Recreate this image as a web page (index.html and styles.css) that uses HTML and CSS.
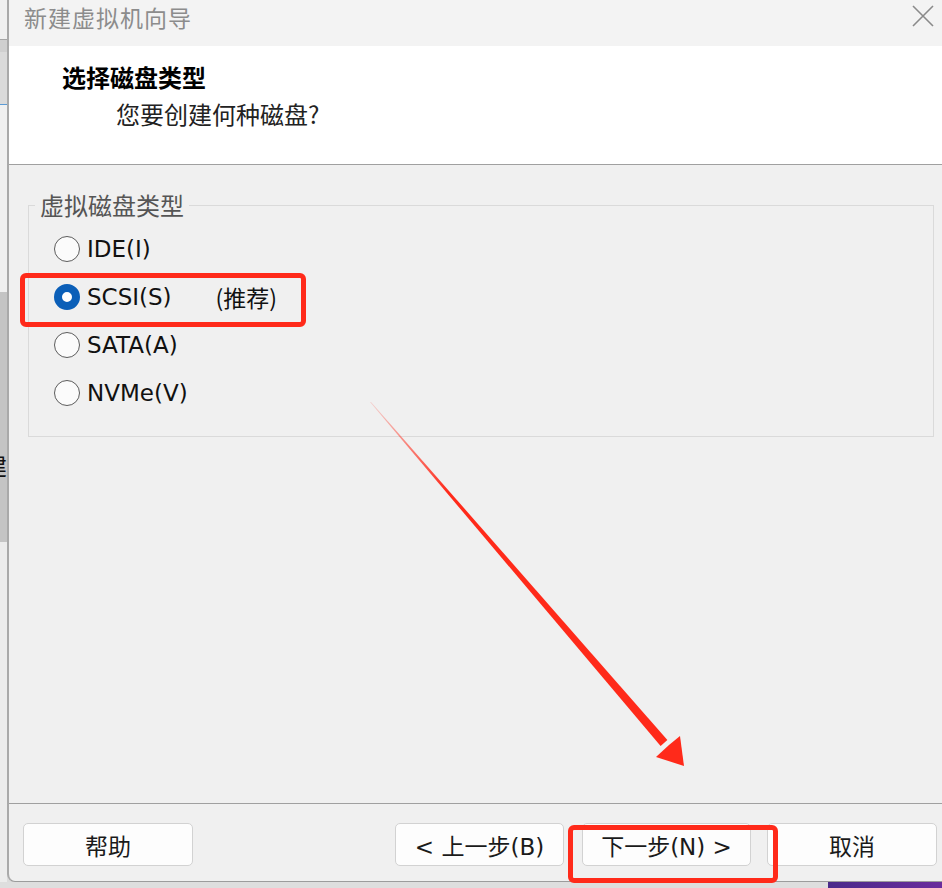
FILE: index.html
```html
<!DOCTYPE html>
<html lang="zh-CN">
<head>
    <meta charset="UTF-8">
    <meta name="viewport" content="width=device-width, initial-scale=1.0">
    <title>新建虚拟机向导</title>
    <link rel="stylesheet" href="styles.css">
</head>
<body>
    <div class="screen">
        <div class="main">
            <!-- window behind the dialog -->
            <div class="backdrop">
                <div class="bd-top"></div>
                <div class="bd-tabs"></div>
                <div class="bd-bar"></div>
                <div class="bd-light"></div>
                <div class="bd-panel"><span class="bd-char">建</span></div>
                <div class="bd-rest"></div>
            </div>

            <!-- Dialog -->
            <div class="dialog">
                <div class="titlebar">
                    <span class="title">新建虚拟机向导</span>
                    <svg class="close" width="22" height="22" viewBox="0 0 22 22">
                        <path d="M1 1 L21 21 M21 1 L1 21" stroke="#8a8a8a" stroke-width="1.6" fill="none"/>
                    </svg>
                </div>

                <div class="header">
                    <h1>选择磁盘类型</h1>
                    <p>您要创建何种磁盘?</p>
                </div>

                <div class="content">
                    <fieldset class="group">
                        <legend>虚拟磁盘类型</legend>
                        <label class="radio"><span class="dot"></span>IDE(I)</label>
                        <label class="radio"><span class="dot checked"></span>SCSI(S)<span class="hint">(推荐)</span></label>
                        <label class="radio"><span class="dot"></span>SATA(A)</label>
                        <label class="radio"><span class="dot"></span>NVMe(V)</label>
                    </fieldset>
                </div>

                <div class="footer">
                    <button class="btn">帮助</button>
                    <button class="btn back">&lt; 上一步(B)</button>
                    <button class="btn next">下一步(N) &gt;</button>
                    <button class="btn cancel">取消</button>
                </div>
            </div>
        </div>
        <div class="bottom">
            <div class="shadow"></div>
            <div class="purple"></div>
        </div>
    </div>

    <!-- annotations -->
    <div class="mark mark-scsi"></div>
    <div class="mark mark-next"></div>
    <svg class="arrow" width="942" height="888" viewBox="0 0 942 888">
        <defs>
            <linearGradient id="fade" x1="370" y1="402" x2="683" y2="765" gradientUnits="userSpaceOnUse">
                <stop offset="0" stop-color="#ff2a1a" stop-opacity="0.15"/>
                <stop offset="0.25" stop-color="#ff2a1a" stop-opacity="1"/>
            </linearGradient>
        </defs>
        <polygon points="370,402 371,402 667.4,740.1 660.6,745.9" fill="url(#fade)"/>
        <polygon points="656,757 684,766 680,736 669,745" fill="#ff2a1a"/>
    </svg>
</body>
</html>
```

FILE: styles.css
```css
* {
    margin: 0;
    padding: 0;
    box-sizing: border-box;
}

body {
    width: 942px;
    height: 888px;
    overflow: hidden;
    background: #dcdcdc;
    font-family: "DejaVu Sans", "Noto Sans CJK SC", sans-serif;
    font-size: 23px;
    color: #1a1a1a;
    position: relative;
}

.screen {
    display: flex;
    flex-direction: column;
    height: 888px;
}

.main {
    display: flex;
    height: 882px;
}

/* Backdrop window strip */
.backdrop {
    flex: 0 0 7px;
    display: flex;
    flex-direction: column;
    overflow: hidden;
}

.bd-top {
    height: 40px;
    background: #f0f0f0;
    border-bottom: 1px solid #a6a6a6;
}

.bd-tabs {
    height: 12px;
    background: #cfcfcf;
}

.bd-bar {
    height: 53px;
    background: #dadada;
    border-bottom: 1px solid #5b9bd5;
}

.bd-light {
    height: 187px;
    background: #f0f0f0;
}

.bd-panel {
    height: 250px;
    background: #c4c4c4;
    padding-top: 161px;
}

.bd-char {
    display: block;
    margin-left: -17px;
    font-family: "Noto Sans CJK SC", sans-serif;
    font-size: 24px;
    line-height: 24px;
    color: #111;
    white-space: nowrap;
}

.bd-rest {
    flex: 1;
    background: #ececec;
}

/* Dialog */
.dialog {
    flex: 0 0 945px;
    display: flex;
    flex-direction: column;
    background: #f0f0f0;
    border-left: 2px solid #a9a9a9;
    border-bottom: 1px solid #9c9c9c;
    border-bottom-left-radius: 8px;
    overflow: hidden;
}

.titlebar {
    height: 46px;
    background: #f3f3f3;
    display: flex;
    justify-content: space-between;
    padding: 3px 18px 0 15px;
}

.title {
    font-family: "Noto Sans CJK SC", sans-serif;
    font-size: 23px;
    line-height: 28px;
    letter-spacing: 1px;
    color: #8c8c8c;
}

.close {
    margin-top: 2px;
}

.header {
    height: 119px;
    background: #fff;
    border-bottom: 1px solid #a0a0a0;
    padding: 16px 0 0 53px;
    font-family: "Noto Sans CJK SC", sans-serif;
}

.header h1 {
    font-size: 24px;
    line-height: 30px;
    font-weight: 700;
    color: #000;
}

.header p {
    font-size: 24px;
    line-height: 30px;
    margin: 7px 0 0 54px;
    color: #222;
}

.content {
    flex: 1;
    padding: 26px 18px 0 19px;
}

.group {
    border: 1px solid #dadada;
    padding: 6px 0 19px 25px;
}

.group legend {
    margin-left: -19px;
    padding: 0 5px;
    font-family: "Noto Sans CJK SC", sans-serif;
    font-size: 24px;
    line-height: 28px;
    color: #555;
}

.radio {
    display: flex;
    align-items: center;
    height: 48px;
    line-height: 28px;
    color: #111;
}

.dot {
    width: 26px;
    height: 26px;
    border: 1.5px solid #5c5c5c;
    border-radius: 50%;
    background: #fbfbfb;
    margin-right: 7px;
}

.dot.checked {
    border: 8px solid #0b5fb8;
    background: #fff;
}

.hint {
    margin-left: 44px;
    font-family: "Noto Sans CJK SC", sans-serif;
}

/* Footer buttons */
.footer {
    height: 78px;
    border-top: 1px solid #a0a0a0;
    display: flex;
    padding: 19px 15px 0 14px;
}

.btn {
    width: 170px;
    height: 43px;
    background: #fdfdfd;
    border: 1px solid #d2d2d2;
    border-radius: 5px;
    font-family: "DejaVu Sans", "Noto Sans CJK SC", sans-serif;
    font-size: 23px;
    color: #1a1a1a;
}

.btn.back {
    margin-left: auto;
    width: 169px;
}

.btn.next {
    margin-left: 18px;
    width: 169px;
}

.btn.cancel {
    margin-left: 16px;
}

.bottom {
    height: 6px;
    display: flex;
}

.shadow {
    flex: 1;
    background: #dedede;
}

.purple {
    flex: 0 0 114px;
    background: linear-gradient(90deg, #4a2a8a, #6a2c9c);
}

/* Annotations */
.mark {
    position: absolute;
    border: 5px solid #ff2a1a;
    border-radius: 6px;
}

.mark-scsi {
    left: 20px;
    top: 273px;
    width: 286px;
    height: 54px;
}

.mark-next {
    left: 568px;
    top: 825px;
    width: 210px;
    height: 58px;
}

.arrow {
    position: absolute;
    left: 0;
    top: 0;
    pointer-events: none;
}
```
